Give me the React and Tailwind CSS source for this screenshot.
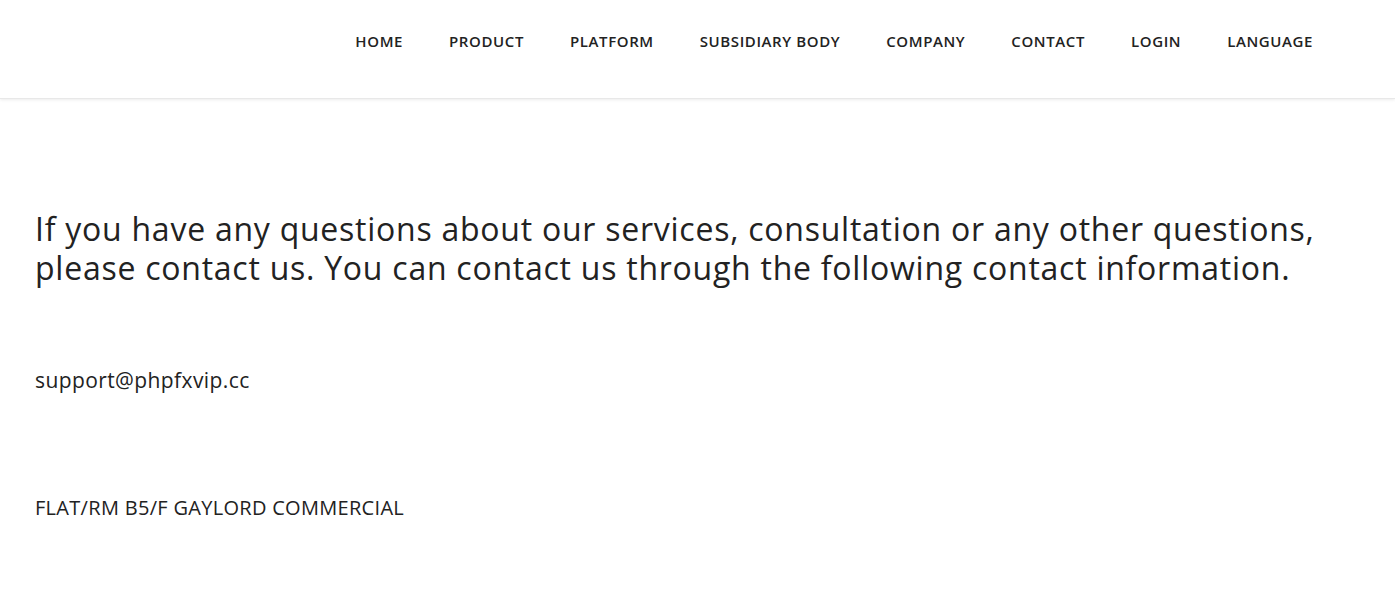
const NAV = ['HOME', 'PRODUCT', 'PLATFORM', 'SUBSIDIARY BODY', 'COMPANY', 'CONTACT', 'LOGIN', 'LANGUAGE'];

export default function App() {
  return (
    <div className="min-h-screen bg-white text-[#222] font-['Open_Sans',sans-serif]">
      <header className="h-[99px] flex items-center justify-end pr-[59px] border-b border-[#e8e8e8] shadow-[0_1px_3px_rgba(0,0,0,0.08)]">
        <nav className="flex items-center -mt-[15px]">
          {NAV.map((item) => (
            <a key={item} href="#" className="px-[23px] text-[15px] font-semibold tracking-[0.6px] text-[#222]">
              {item}
            </a>
          ))}
        </nav>
      </header>

      <main className="px-[35px] pt-[110px]">
        <p className="text-[32px] leading-[39px] tracking-[0.75px] text-[#222]">
          If you have any questions about our services, consultation or any other questions, please contact us. You can contact us through the following contact information.
        </p>

        <p className="mt-[79px] text-[21px] leading-[28px] tracking-[0.4px]">support@phpfxvip.cc</p>

        <p className="mt-[100px] text-[20px] leading-[28px] tracking-[0.3px] uppercase">FLAT/RM B5/F GAYLORD COMMERCIAL</p>
      </main>
    </div>
  );
}
